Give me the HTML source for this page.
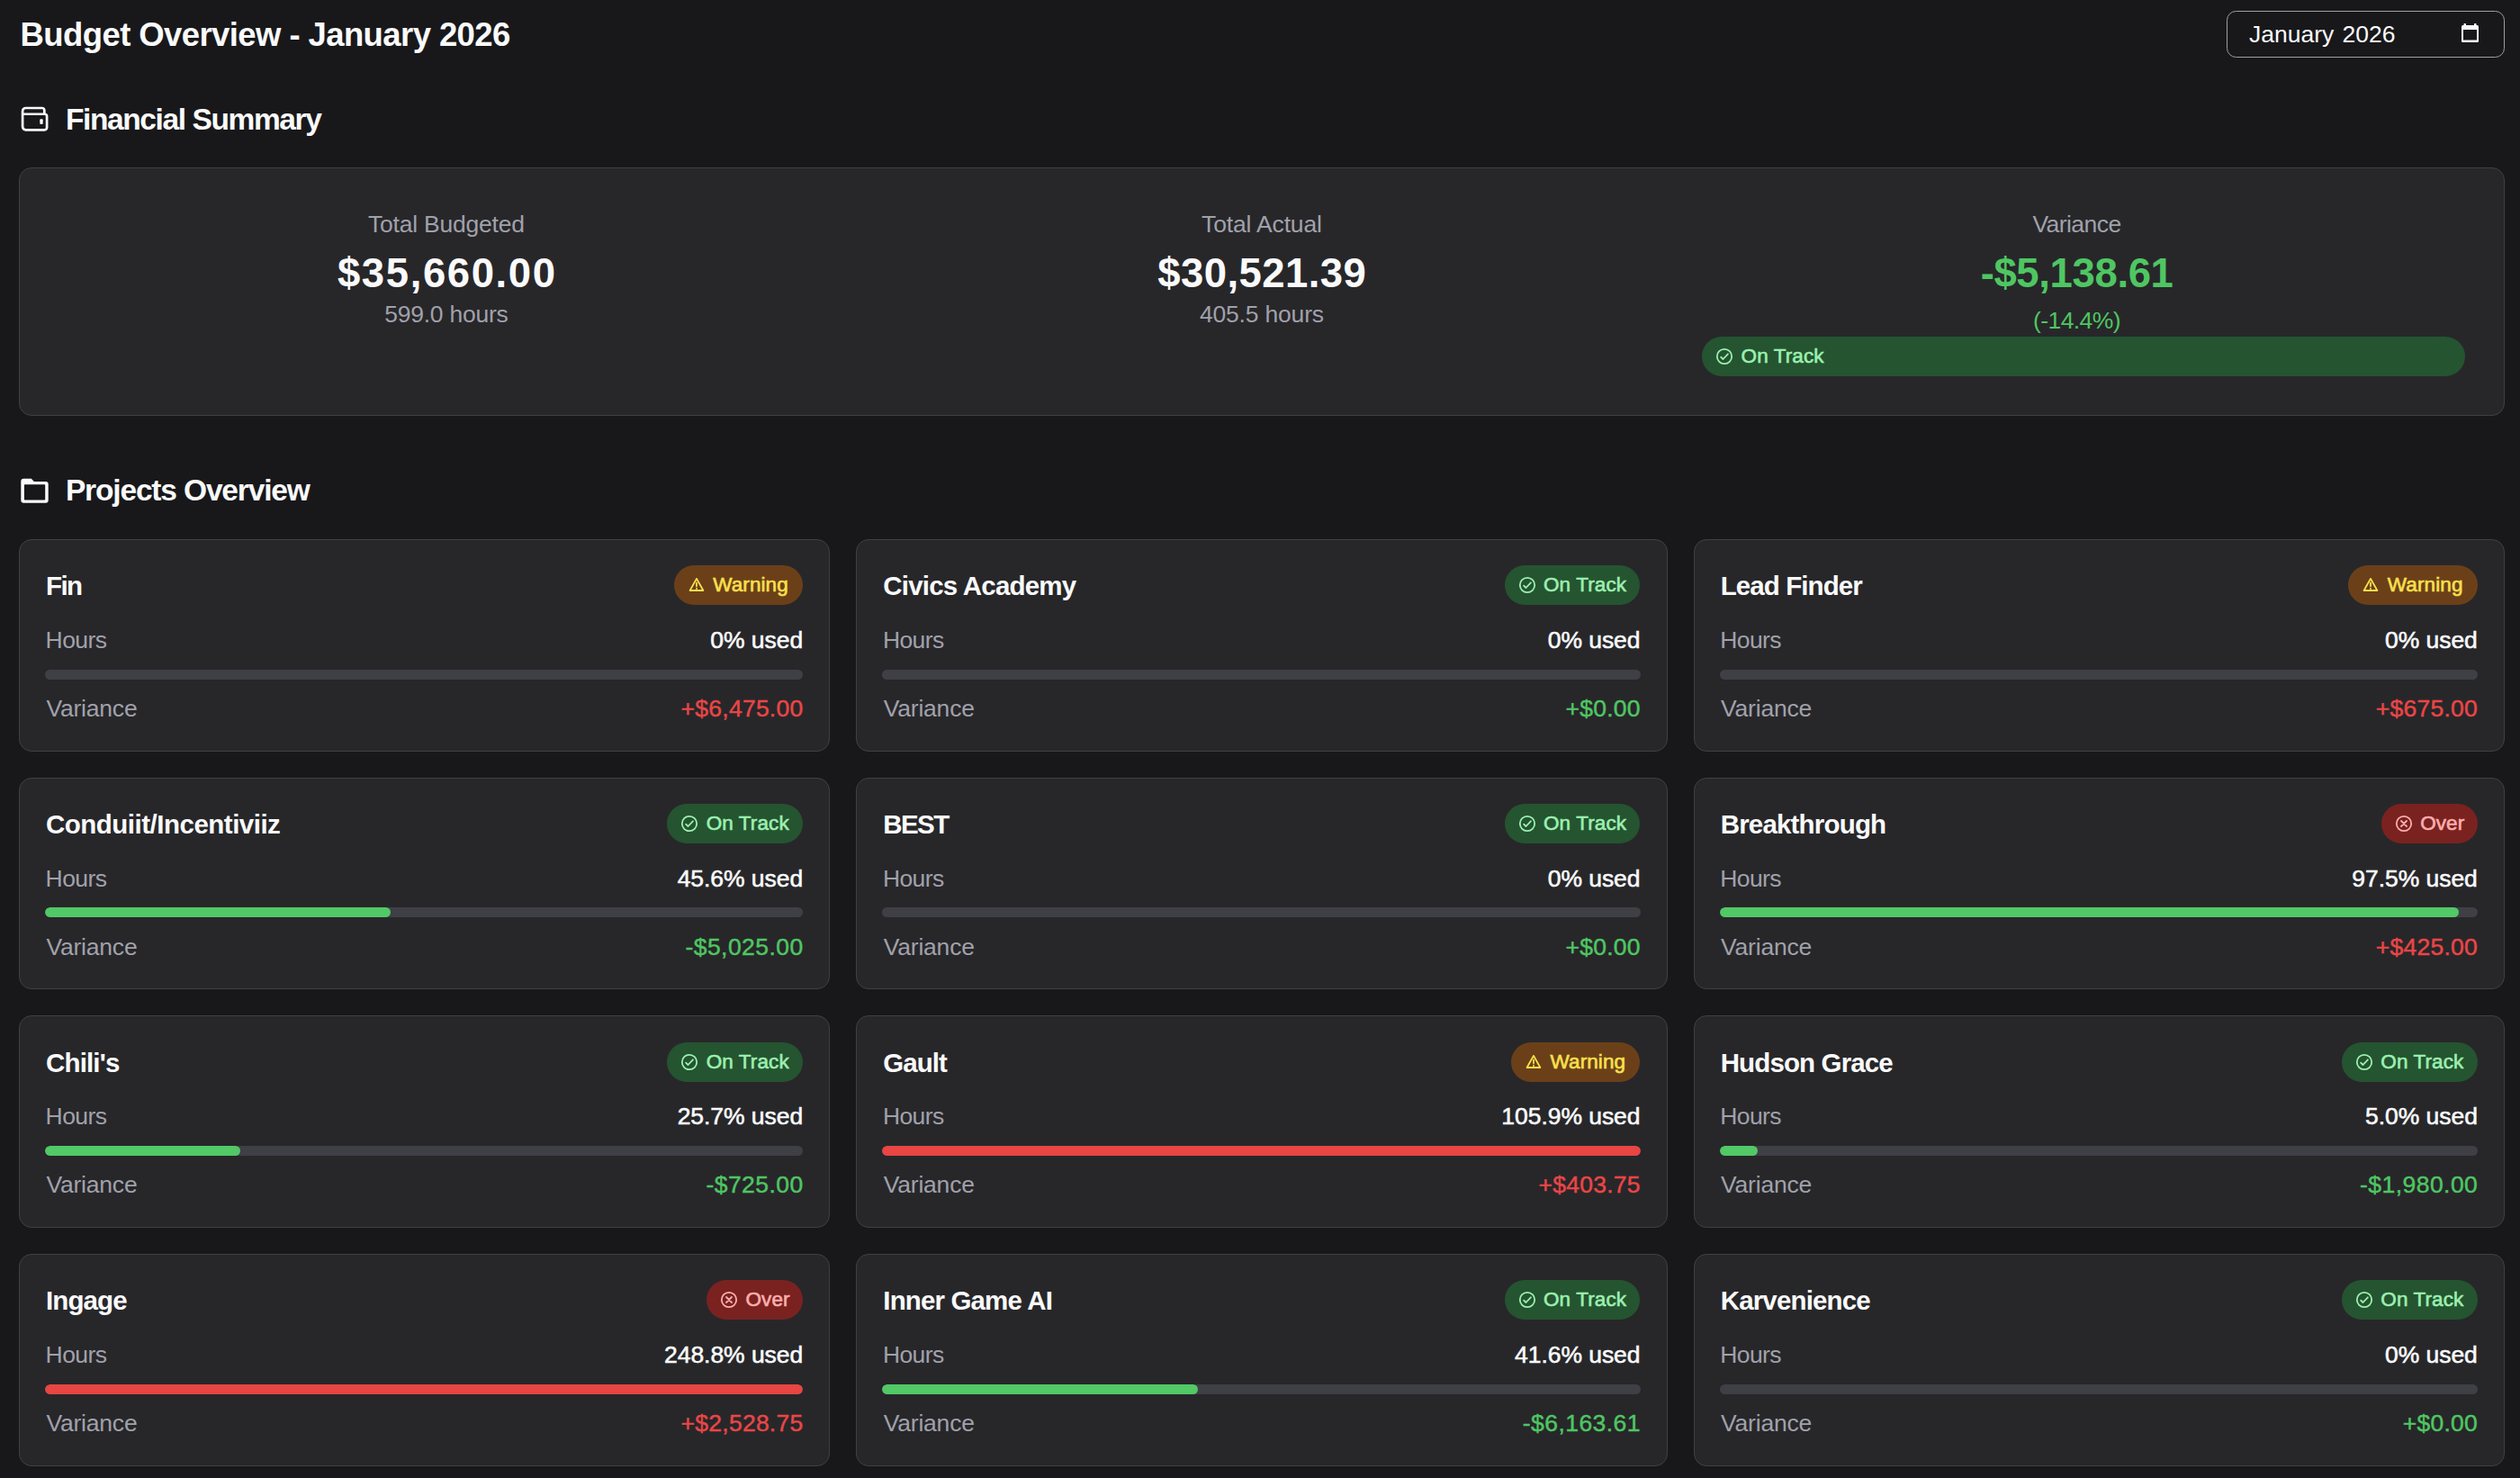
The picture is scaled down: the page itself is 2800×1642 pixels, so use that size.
<!DOCTYPE html>
<html><head><meta charset="utf-8"><title>Budget Overview</title>
<style>
html,body{margin:0;padding:0;background:#18181b;}
body{width:2800px;height:1642px;position:relative;overflow:hidden;font-family:"Liberation Sans",sans-serif;}
.t{position:absolute;white-space:nowrap;}
.card{position:absolute;box-sizing:border-box;background:#27272a;border:1px solid #3f3f46;border-radius:14px;}
.badge{position:absolute;height:44px;border-radius:22px;}
.track{position:absolute;height:11px;border-radius:6px;background:#3f3f46;overflow:hidden;}
.fill{position:absolute;left:0;top:0;bottom:0;border-radius:6px;}
</style></head><body>
<div class="t" style="top:21.00px;font-size:36.5px;line-height:36.5px;font-weight:700;color:#fafafa;letter-spacing:-0.594px;left:22.60px;">Budget Overview - January 2026</div>
<div style="position:absolute;left:2474px;top:12px;width:309px;height:52px;box-sizing:border-box;border:1.2px solid #9d9da6;border-radius:10.5px;"></div>
<div class="t" style="top:24.76px;font-size:26.5px;line-height:26.5px;font-weight:400;color:#fafafa;left:2499.00px;">January</div>
<div class="t" style="top:24.76px;font-size:26.5px;line-height:26.5px;font-weight:400;color:#fafafa;left:-338.51px;width:3000px;text-align:right;">2026</div>
<svg style="position:absolute;left:2733px;top:24px" width="24" height="26" viewBox="0 0 24 26"><rect x="2" y="4" width="19" height="19" rx="1.5" fill="#fafafa"/><rect x="4" y="9" width="15" height="11.5" fill="#18181b"/><rect x="4.5" y="2" width="2.5" height="3" rx="0.8" fill="#fafafa"/><rect x="16" y="2" width="2.5" height="3" rx="0.8" fill="#fafafa"/></svg>
<svg style="position:absolute;left:20px;top:115px" width="36" height="34" viewBox="0 0 36 34"><path d="M5.1 11.75H29.6A2.5 2.5 0 0 1 32.1 14.25V26.8A2.5 2.5 0 0 1 29.6 29.3H8.6A3.5 3.5 0 0 1 5.1 25.8V8.5A3.5 3.5 0 0 1 8.6 5H26.8A2.5 2.5 0 0 1 29.3 7.5V11.75" fill="none" stroke="#fafafa" stroke-width="2.7" stroke-linejoin="round"/><rect x="24.3" y="17.2" width="3.4" height="5.8" rx="1" fill="#fafafa"/></svg>
<div class="t" style="top:115.64px;font-size:33.5px;line-height:33.5px;font-weight:700;color:#fafafa;letter-spacing:-1.387px;left:72.90px;">Financial Summary</div>
<div class="card" style="left:21px;top:186px;width:2762px;height:276px;"></div>
<div class="t" style="top:235.56px;font-size:26.5px;line-height:26.5px;font-weight:400;color:#a1a1aa;letter-spacing:-0.225px;left:409.05px;">Total Budgeted</div>
<div class="t" style="top:280.78px;font-size:45.5px;line-height:45.5px;font-weight:700;color:#fafafa;letter-spacing:1.608px;left:374.90px;">$35,660.00</div>
<div class="t" style="top:335.66px;font-size:26.5px;line-height:26.5px;font-weight:400;color:#a1a1aa;letter-spacing:-0.249px;left:427.25px;">599.0 hours</div>
<div class="t" style="top:235.56px;font-size:26.5px;line-height:26.5px;font-weight:400;color:#a1a1aa;letter-spacing:-0.150px;left:1335.05px;">Total Actual</div>
<div class="t" style="top:280.78px;font-size:45.5px;line-height:45.5px;font-weight:700;color:#fafafa;letter-spacing:0.441px;left:1286.15px;">$30,521.39</div>
<div class="t" style="top:335.66px;font-size:26.5px;line-height:26.5px;font-weight:400;color:#a1a1aa;letter-spacing:-0.179px;left:1332.90px;">405.5 hours</div>
<div class="t" style="top:235.56px;font-size:26.5px;line-height:26.5px;font-weight:400;color:#a1a1aa;letter-spacing:-0.560px;left:2258.45px;">Variance</div>
<div class="t" style="top:280.78px;font-size:45.5px;line-height:45.5px;font-weight:700;color:#4fc662;letter-spacing:-0.367px;left:2200.65px;">-$5,138.61</div>
<div class="t" style="top:342.56px;font-size:26.5px;line-height:26.5px;font-weight:400;color:#4fc662;letter-spacing:-0.604px;left:2259.10px;">(-14.4%)</div>
<div class="badge" style="left:1891px;top:374px;width:848px;background:#255430"><svg width="20" height="20" viewBox="0 0 20 20" style="position:absolute;left:15px;top:12px"><circle cx="10" cy="10" r="8.2" fill="none" stroke="#9cf0b0" stroke-width="1.8"/><path d="M6.1 10.6 8.5 13 13.9 7.3" fill="none" stroke="#9cf0b0" stroke-width="1.8" stroke-linecap="round" stroke-linejoin="round"/></svg><div class="t" style="top:11.05px;font-size:22.5px;line-height:22.5px;font-weight:400;color:#9cf0b0;letter-spacing:0.100px;-webkit-text-stroke:0.6px #9cf0b0;left:43.60px;">On Track</div></div>
<svg style="position:absolute;left:20px;top:528px" width="36" height="34" viewBox="0 0 36 34"><path fill-rule="evenodd" fill="#fafafa" d="M6.3 3.8H14.8L17.8 7.0H30.7Q33.7 7.0 33.7 10V27.8Q33.7 30.8 30.7 30.8H6.3Q3.3 30.8 3.3 27.8V6.8Q3.3 3.8 6.3 3.8ZM7.5 10.3H29.4Q30.2 10.3 30.2 11.1V26.8Q30.2 27.6 29.4 27.6H7.7Q6.9 27.6 6.9 26.8V10.9Q6.9 10.3 7.5 10.3Z"/></svg>
<div class="t" style="top:527.74px;font-size:33.5px;line-height:33.5px;font-weight:700;color:#fafafa;letter-spacing:-1.157px;left:72.90px;">Projects Overview</div>
<div class="card" style="left:21.00px;top:599.00px;width:901.4px;height:235.8px;"><div class="t" style="top:36.32px;font-size:29.5px;line-height:29.5px;font-weight:700;color:#fafafa;letter-spacing:-1.600px;left:29.00px;">Fin</div><div class="badge" style="left:726.70px;top:28.30px;width:143.30px;background:#6b4019"><svg width="20" height="20" viewBox="0 0 20 20" style="position:absolute;left:15px;top:12px"><path d="M10 2.9 17.4 16 H2.6 Z" fill="none" stroke="#fbe04e" stroke-width="1.8" stroke-linejoin="round"/><path d="M10 7.5V11.3M10 13.6V14" fill="none" stroke="#fbe04e" stroke-width="1.8" stroke-linecap="round"/></svg><div class="t" style="top:11.05px;font-size:22.5px;line-height:22.5px;font-weight:400;color:#fbe04e;letter-spacing:0.100px;-webkit-text-stroke:0.6px #fbe04e;left:43.50px;">Warning</div></div><div class="t" style="top:98.16px;font-size:26.5px;line-height:26.5px;font-weight:400;color:#a1a1aa;letter-spacing:-0.600px;left:28.60px;">Hours</div><div class="t" style="top:98.16px;font-size:26.5px;line-height:26.5px;font-weight:400;color:#fafafa;letter-spacing:-0.050px;-webkit-text-stroke:0.55px #fafafa;left:-2129.87px;width:3000px;text-align:right;">0% used</div><div class="track" style="left:28px;top:143.5px;width:842.4px;"></div><div class="t" style="top:173.96px;font-size:26.5px;line-height:26.5px;font-weight:400;color:#a1a1aa;letter-spacing:-0.200px;left:29.40px;">Variance</div><div class="t" style="top:173.96px;font-size:26.5px;line-height:26.5px;font-weight:400;color:#ea4646;letter-spacing:0.250px;-webkit-text-stroke:0.45px #ea4646;left:-2129.54px;width:3000px;text-align:right;">+$6,475.00</div></div>
<div class="card" style="left:951.33px;top:599.00px;width:901.4px;height:235.8px;"><div class="t" style="top:36.32px;font-size:29.5px;line-height:29.5px;font-weight:700;color:#fafafa;letter-spacing:-0.795px;left:29.00px;">Civics Academy</div><div class="badge" style="left:719.20px;top:28.30px;width:150.80px;background:#255430"><svg width="20" height="20" viewBox="0 0 20 20" style="position:absolute;left:15px;top:12px"><circle cx="10" cy="10" r="8.2" fill="none" stroke="#9cf0b0" stroke-width="1.8"/><path d="M6.1 10.6 8.5 13 13.9 7.3" fill="none" stroke="#9cf0b0" stroke-width="1.8" stroke-linecap="round" stroke-linejoin="round"/></svg><div class="t" style="top:11.05px;font-size:22.5px;line-height:22.5px;font-weight:400;color:#9cf0b0;letter-spacing:0.100px;-webkit-text-stroke:0.6px #9cf0b0;left:43.50px;">On Track</div></div><div class="t" style="top:98.16px;font-size:26.5px;line-height:26.5px;font-weight:400;color:#a1a1aa;letter-spacing:-0.600px;left:28.60px;">Hours</div><div class="t" style="top:98.16px;font-size:26.5px;line-height:26.5px;font-weight:400;color:#fafafa;letter-spacing:-0.050px;-webkit-text-stroke:0.55px #fafafa;left:-2129.87px;width:3000px;text-align:right;">0% used</div><div class="track" style="left:28px;top:143.5px;width:842.4px;"></div><div class="t" style="top:173.96px;font-size:26.5px;line-height:26.5px;font-weight:400;color:#a1a1aa;letter-spacing:-0.200px;left:29.40px;">Variance</div><div class="t" style="top:173.96px;font-size:26.5px;line-height:26.5px;font-weight:400;color:#4fc662;letter-spacing:0.250px;-webkit-text-stroke:0.45px #4fc662;left:-2129.58px;width:3000px;text-align:right;">+$0.00</div></div>
<div class="card" style="left:1881.67px;top:599.00px;width:901.4px;height:235.8px;"><div class="t" style="top:36.32px;font-size:29.5px;line-height:29.5px;font-weight:700;color:#fafafa;letter-spacing:-0.909px;left:29.00px;">Lead Finder</div><div class="badge" style="left:726.70px;top:28.30px;width:143.30px;background:#6b4019"><svg width="20" height="20" viewBox="0 0 20 20" style="position:absolute;left:15px;top:12px"><path d="M10 2.9 17.4 16 H2.6 Z" fill="none" stroke="#fbe04e" stroke-width="1.8" stroke-linejoin="round"/><path d="M10 7.5V11.3M10 13.6V14" fill="none" stroke="#fbe04e" stroke-width="1.8" stroke-linecap="round"/></svg><div class="t" style="top:11.05px;font-size:22.5px;line-height:22.5px;font-weight:400;color:#fbe04e;letter-spacing:0.100px;-webkit-text-stroke:0.6px #fbe04e;left:43.50px;">Warning</div></div><div class="t" style="top:98.16px;font-size:26.5px;line-height:26.5px;font-weight:400;color:#a1a1aa;letter-spacing:-0.600px;left:28.60px;">Hours</div><div class="t" style="top:98.16px;font-size:26.5px;line-height:26.5px;font-weight:400;color:#fafafa;letter-spacing:-0.050px;-webkit-text-stroke:0.55px #fafafa;left:-2129.87px;width:3000px;text-align:right;">0% used</div><div class="track" style="left:28px;top:143.5px;width:842.4px;"></div><div class="t" style="top:173.96px;font-size:26.5px;line-height:26.5px;font-weight:400;color:#a1a1aa;letter-spacing:-0.200px;left:29.40px;">Variance</div><div class="t" style="top:173.96px;font-size:26.5px;line-height:26.5px;font-weight:400;color:#ea4646;letter-spacing:0.250px;-webkit-text-stroke:0.45px #ea4646;left:-2129.58px;width:3000px;text-align:right;">+$675.00</div></div>
<div class="card" style="left:21.00px;top:863.67px;width:901.4px;height:235.8px;"><div class="t" style="top:36.32px;font-size:29.5px;line-height:29.5px;font-weight:700;color:#fafafa;letter-spacing:-0.502px;left:29.00px;">Conduiit/Incentiviiz</div><div class="badge" style="left:719.20px;top:28.30px;width:150.80px;background:#255430"><svg width="20" height="20" viewBox="0 0 20 20" style="position:absolute;left:15px;top:12px"><circle cx="10" cy="10" r="8.2" fill="none" stroke="#9cf0b0" stroke-width="1.8"/><path d="M6.1 10.6 8.5 13 13.9 7.3" fill="none" stroke="#9cf0b0" stroke-width="1.8" stroke-linecap="round" stroke-linejoin="round"/></svg><div class="t" style="top:11.05px;font-size:22.5px;line-height:22.5px;font-weight:400;color:#9cf0b0;letter-spacing:0.100px;-webkit-text-stroke:0.6px #9cf0b0;left:43.50px;">On Track</div></div><div class="t" style="top:98.16px;font-size:26.5px;line-height:26.5px;font-weight:400;color:#a1a1aa;letter-spacing:-0.600px;left:28.60px;">Hours</div><div class="t" style="top:98.16px;font-size:26.5px;line-height:26.5px;font-weight:400;color:#fafafa;letter-spacing:-0.050px;-webkit-text-stroke:0.55px #fafafa;left:-2129.87px;width:3000px;text-align:right;">45.6% used</div><div class="track" style="left:28px;top:143.5px;width:842.4px;"><div class="fill" style="width:384.13px;background:#52c866"></div></div><div class="t" style="top:173.96px;font-size:26.5px;line-height:26.5px;font-weight:400;color:#a1a1aa;letter-spacing:-0.200px;left:29.40px;">Variance</div><div class="t" style="top:173.96px;font-size:26.5px;line-height:26.5px;font-weight:400;color:#4fc662;letter-spacing:0.450px;-webkit-text-stroke:0.45px #4fc662;left:-2129.37px;width:3000px;text-align:right;">-$5,025.00</div></div>
<div class="card" style="left:951.33px;top:863.67px;width:901.4px;height:235.8px;"><div class="t" style="top:36.32px;font-size:29.5px;line-height:29.5px;font-weight:700;color:#fafafa;letter-spacing:-1.600px;left:29.00px;">BEST</div><div class="badge" style="left:719.20px;top:28.30px;width:150.80px;background:#255430"><svg width="20" height="20" viewBox="0 0 20 20" style="position:absolute;left:15px;top:12px"><circle cx="10" cy="10" r="8.2" fill="none" stroke="#9cf0b0" stroke-width="1.8"/><path d="M6.1 10.6 8.5 13 13.9 7.3" fill="none" stroke="#9cf0b0" stroke-width="1.8" stroke-linecap="round" stroke-linejoin="round"/></svg><div class="t" style="top:11.05px;font-size:22.5px;line-height:22.5px;font-weight:400;color:#9cf0b0;letter-spacing:0.100px;-webkit-text-stroke:0.6px #9cf0b0;left:43.50px;">On Track</div></div><div class="t" style="top:98.16px;font-size:26.5px;line-height:26.5px;font-weight:400;color:#a1a1aa;letter-spacing:-0.600px;left:28.60px;">Hours</div><div class="t" style="top:98.16px;font-size:26.5px;line-height:26.5px;font-weight:400;color:#fafafa;letter-spacing:-0.050px;-webkit-text-stroke:0.55px #fafafa;left:-2129.87px;width:3000px;text-align:right;">0% used</div><div class="track" style="left:28px;top:143.5px;width:842.4px;"></div><div class="t" style="top:173.96px;font-size:26.5px;line-height:26.5px;font-weight:400;color:#a1a1aa;letter-spacing:-0.200px;left:29.40px;">Variance</div><div class="t" style="top:173.96px;font-size:26.5px;line-height:26.5px;font-weight:400;color:#4fc662;letter-spacing:0.250px;-webkit-text-stroke:0.45px #4fc662;left:-2129.58px;width:3000px;text-align:right;">+$0.00</div></div>
<div class="card" style="left:1881.67px;top:863.67px;width:901.4px;height:235.8px;"><div class="t" style="top:36.32px;font-size:29.5px;line-height:29.5px;font-weight:700;color:#fafafa;letter-spacing:-0.813px;left:29.00px;">Breakthrough</div><div class="badge" style="left:763.00px;top:28.30px;width:107.00px;background:#7a2220"><svg width="20" height="20" viewBox="0 0 20 20" style="position:absolute;left:15px;top:12px"><circle cx="10" cy="10" r="8.2" fill="none" stroke="#fdaeae" stroke-width="1.8"/><path d="M7 7 13 13M13 7 7 13" fill="none" stroke="#fdaeae" stroke-width="1.8" stroke-linecap="round"/></svg><div class="t" style="top:11.05px;font-size:22.5px;line-height:22.5px;font-weight:400;color:#fdaeae;letter-spacing:0.100px;-webkit-text-stroke:0.6px #fdaeae;left:43.50px;">Over</div></div><div class="t" style="top:98.16px;font-size:26.5px;line-height:26.5px;font-weight:400;color:#a1a1aa;letter-spacing:-0.600px;left:28.60px;">Hours</div><div class="t" style="top:98.16px;font-size:26.5px;line-height:26.5px;font-weight:400;color:#fafafa;letter-spacing:-0.050px;-webkit-text-stroke:0.55px #fafafa;left:-2129.87px;width:3000px;text-align:right;">97.5% used</div><div class="track" style="left:28px;top:143.5px;width:842.4px;"><div class="fill" style="width:821.34px;background:#52c866"></div></div><div class="t" style="top:173.96px;font-size:26.5px;line-height:26.5px;font-weight:400;color:#a1a1aa;letter-spacing:-0.200px;left:29.40px;">Variance</div><div class="t" style="top:173.96px;font-size:26.5px;line-height:26.5px;font-weight:400;color:#ea4646;letter-spacing:0.250px;-webkit-text-stroke:0.45px #ea4646;left:-2129.58px;width:3000px;text-align:right;">+$425.00</div></div>
<div class="card" style="left:21.00px;top:1128.33px;width:901.4px;height:235.8px;"><div class="t" style="top:36.32px;font-size:29.5px;line-height:29.5px;font-weight:700;color:#fafafa;letter-spacing:-0.837px;left:29.00px;">Chili's</div><div class="badge" style="left:719.20px;top:28.30px;width:150.80px;background:#255430"><svg width="20" height="20" viewBox="0 0 20 20" style="position:absolute;left:15px;top:12px"><circle cx="10" cy="10" r="8.2" fill="none" stroke="#9cf0b0" stroke-width="1.8"/><path d="M6.1 10.6 8.5 13 13.9 7.3" fill="none" stroke="#9cf0b0" stroke-width="1.8" stroke-linecap="round" stroke-linejoin="round"/></svg><div class="t" style="top:11.05px;font-size:22.5px;line-height:22.5px;font-weight:400;color:#9cf0b0;letter-spacing:0.100px;-webkit-text-stroke:0.6px #9cf0b0;left:43.50px;">On Track</div></div><div class="t" style="top:98.16px;font-size:26.5px;line-height:26.5px;font-weight:400;color:#a1a1aa;letter-spacing:-0.600px;left:28.60px;">Hours</div><div class="t" style="top:98.16px;font-size:26.5px;line-height:26.5px;font-weight:400;color:#fafafa;letter-spacing:-0.050px;-webkit-text-stroke:0.55px #fafafa;left:-2129.87px;width:3000px;text-align:right;">25.7% used</div><div class="track" style="left:28px;top:143.5px;width:842.4px;"><div class="fill" style="width:216.50px;background:#52c866"></div></div><div class="t" style="top:173.96px;font-size:26.5px;line-height:26.5px;font-weight:400;color:#a1a1aa;letter-spacing:-0.200px;left:29.40px;">Variance</div><div class="t" style="top:173.96px;font-size:26.5px;line-height:26.5px;font-weight:400;color:#4fc662;letter-spacing:0.450px;-webkit-text-stroke:0.45px #4fc662;left:-2129.34px;width:3000px;text-align:right;">-$725.00</div></div>
<div class="card" style="left:951.33px;top:1128.33px;width:901.4px;height:235.8px;"><div class="t" style="top:36.32px;font-size:29.5px;line-height:29.5px;font-weight:700;color:#fafafa;letter-spacing:-0.993px;left:29.00px;">Gault</div><div class="badge" style="left:726.70px;top:28.30px;width:143.30px;background:#6b4019"><svg width="20" height="20" viewBox="0 0 20 20" style="position:absolute;left:15px;top:12px"><path d="M10 2.9 17.4 16 H2.6 Z" fill="none" stroke="#fbe04e" stroke-width="1.8" stroke-linejoin="round"/><path d="M10 7.5V11.3M10 13.6V14" fill="none" stroke="#fbe04e" stroke-width="1.8" stroke-linecap="round"/></svg><div class="t" style="top:11.05px;font-size:22.5px;line-height:22.5px;font-weight:400;color:#fbe04e;letter-spacing:0.100px;-webkit-text-stroke:0.6px #fbe04e;left:43.50px;">Warning</div></div><div class="t" style="top:98.16px;font-size:26.5px;line-height:26.5px;font-weight:400;color:#a1a1aa;letter-spacing:-0.600px;left:28.60px;">Hours</div><div class="t" style="top:98.16px;font-size:26.5px;line-height:26.5px;font-weight:400;color:#fafafa;letter-spacing:-0.050px;-webkit-text-stroke:0.55px #fafafa;left:-2129.83px;width:3000px;text-align:right;">105.9% used</div><div class="track" style="left:28px;top:143.5px;width:842.4px;"><div class="fill" style="width:842.40px;background:#e84543"></div></div><div class="t" style="top:173.96px;font-size:26.5px;line-height:26.5px;font-weight:400;color:#a1a1aa;letter-spacing:-0.200px;left:29.40px;">Variance</div><div class="t" style="top:173.96px;font-size:26.5px;line-height:26.5px;font-weight:400;color:#ea4646;letter-spacing:0.250px;-webkit-text-stroke:0.45px #ea4646;left:-2129.58px;width:3000px;text-align:right;">+$403.75</div></div>
<div class="card" style="left:1881.67px;top:1128.33px;width:901.4px;height:235.8px;"><div class="t" style="top:36.32px;font-size:29.5px;line-height:29.5px;font-weight:700;color:#fafafa;letter-spacing:-0.867px;left:29.00px;">Hudson Grace</div><div class="badge" style="left:719.20px;top:28.30px;width:150.80px;background:#255430"><svg width="20" height="20" viewBox="0 0 20 20" style="position:absolute;left:15px;top:12px"><circle cx="10" cy="10" r="8.2" fill="none" stroke="#9cf0b0" stroke-width="1.8"/><path d="M6.1 10.6 8.5 13 13.9 7.3" fill="none" stroke="#9cf0b0" stroke-width="1.8" stroke-linecap="round" stroke-linejoin="round"/></svg><div class="t" style="top:11.05px;font-size:22.5px;line-height:22.5px;font-weight:400;color:#9cf0b0;letter-spacing:0.100px;-webkit-text-stroke:0.6px #9cf0b0;left:43.50px;">On Track</div></div><div class="t" style="top:98.16px;font-size:26.5px;line-height:26.5px;font-weight:400;color:#a1a1aa;letter-spacing:-0.600px;left:28.60px;">Hours</div><div class="t" style="top:98.16px;font-size:26.5px;line-height:26.5px;font-weight:400;color:#fafafa;letter-spacing:-0.050px;-webkit-text-stroke:0.55px #fafafa;left:-2129.83px;width:3000px;text-align:right;">5.0% used</div><div class="track" style="left:28px;top:143.5px;width:842.4px;"><div class="fill" style="width:42.12px;background:#52c866"></div></div><div class="t" style="top:173.96px;font-size:26.5px;line-height:26.5px;font-weight:400;color:#a1a1aa;letter-spacing:-0.200px;left:29.40px;">Variance</div><div class="t" style="top:173.96px;font-size:26.5px;line-height:26.5px;font-weight:400;color:#4fc662;letter-spacing:0.450px;-webkit-text-stroke:0.45px #4fc662;left:-2129.37px;width:3000px;text-align:right;">-$1,980.00</div></div>
<div class="card" style="left:21.00px;top:1393.00px;width:901.4px;height:235.8px;"><div class="t" style="top:36.32px;font-size:29.5px;line-height:29.5px;font-weight:700;color:#fafafa;letter-spacing:-0.893px;left:29.00px;">Ingage</div><div class="badge" style="left:763.00px;top:28.30px;width:107.00px;background:#7a2220"><svg width="20" height="20" viewBox="0 0 20 20" style="position:absolute;left:15px;top:12px"><circle cx="10" cy="10" r="8.2" fill="none" stroke="#fdaeae" stroke-width="1.8"/><path d="M7 7 13 13M13 7 7 13" fill="none" stroke="#fdaeae" stroke-width="1.8" stroke-linecap="round"/></svg><div class="t" style="top:11.05px;font-size:22.5px;line-height:22.5px;font-weight:400;color:#fdaeae;letter-spacing:0.100px;-webkit-text-stroke:0.6px #fdaeae;left:43.50px;">Over</div></div><div class="t" style="top:98.16px;font-size:26.5px;line-height:26.5px;font-weight:400;color:#a1a1aa;letter-spacing:-0.600px;left:28.60px;">Hours</div><div class="t" style="top:98.16px;font-size:26.5px;line-height:26.5px;font-weight:400;color:#fafafa;letter-spacing:-0.050px;-webkit-text-stroke:0.55px #fafafa;left:-2129.83px;width:3000px;text-align:right;">248.8% used</div><div class="track" style="left:28px;top:143.5px;width:842.4px;"><div class="fill" style="width:842.40px;background:#e84543"></div></div><div class="t" style="top:173.96px;font-size:26.5px;line-height:26.5px;font-weight:400;color:#a1a1aa;letter-spacing:-0.200px;left:29.40px;">Variance</div><div class="t" style="top:173.96px;font-size:26.5px;line-height:26.5px;font-weight:400;color:#ea4646;letter-spacing:0.250px;-webkit-text-stroke:0.45px #ea4646;left:-2129.54px;width:3000px;text-align:right;">+$2,528.75</div></div>
<div class="card" style="left:951.33px;top:1393.00px;width:901.4px;height:235.8px;"><div class="t" style="top:36.32px;font-size:29.5px;line-height:29.5px;font-weight:700;color:#fafafa;letter-spacing:-0.867px;left:29.00px;">Inner Game AI</div><div class="badge" style="left:719.20px;top:28.30px;width:150.80px;background:#255430"><svg width="20" height="20" viewBox="0 0 20 20" style="position:absolute;left:15px;top:12px"><circle cx="10" cy="10" r="8.2" fill="none" stroke="#9cf0b0" stroke-width="1.8"/><path d="M6.1 10.6 8.5 13 13.9 7.3" fill="none" stroke="#9cf0b0" stroke-width="1.8" stroke-linecap="round" stroke-linejoin="round"/></svg><div class="t" style="top:11.05px;font-size:22.5px;line-height:22.5px;font-weight:400;color:#9cf0b0;letter-spacing:0.100px;-webkit-text-stroke:0.6px #9cf0b0;left:43.50px;">On Track</div></div><div class="t" style="top:98.16px;font-size:26.5px;line-height:26.5px;font-weight:400;color:#a1a1aa;letter-spacing:-0.600px;left:28.60px;">Hours</div><div class="t" style="top:98.16px;font-size:26.5px;line-height:26.5px;font-weight:400;color:#fafafa;letter-spacing:-0.050px;-webkit-text-stroke:0.55px #fafafa;left:-2129.87px;width:3000px;text-align:right;">41.6% used</div><div class="track" style="left:28px;top:143.5px;width:842.4px;"><div class="fill" style="width:350.44px;background:#52c866"></div></div><div class="t" style="top:173.96px;font-size:26.5px;line-height:26.5px;font-weight:400;color:#a1a1aa;letter-spacing:-0.200px;left:29.40px;">Variance</div><div class="t" style="top:173.96px;font-size:26.5px;line-height:26.5px;font-weight:400;color:#4fc662;letter-spacing:0.450px;-webkit-text-stroke:0.45px #4fc662;left:-2129.37px;width:3000px;text-align:right;">-$6,163.61</div></div>
<div class="card" style="left:1881.67px;top:1393.00px;width:901.4px;height:235.8px;"><div class="t" style="top:36.32px;font-size:29.5px;line-height:29.5px;font-weight:700;color:#fafafa;letter-spacing:-0.835px;left:29.00px;">Karvenience</div><div class="badge" style="left:719.20px;top:28.30px;width:150.80px;background:#255430"><svg width="20" height="20" viewBox="0 0 20 20" style="position:absolute;left:15px;top:12px"><circle cx="10" cy="10" r="8.2" fill="none" stroke="#9cf0b0" stroke-width="1.8"/><path d="M6.1 10.6 8.5 13 13.9 7.3" fill="none" stroke="#9cf0b0" stroke-width="1.8" stroke-linecap="round" stroke-linejoin="round"/></svg><div class="t" style="top:11.05px;font-size:22.5px;line-height:22.5px;font-weight:400;color:#9cf0b0;letter-spacing:0.100px;-webkit-text-stroke:0.6px #9cf0b0;left:43.50px;">On Track</div></div><div class="t" style="top:98.16px;font-size:26.5px;line-height:26.5px;font-weight:400;color:#a1a1aa;letter-spacing:-0.600px;left:28.60px;">Hours</div><div class="t" style="top:98.16px;font-size:26.5px;line-height:26.5px;font-weight:400;color:#fafafa;letter-spacing:-0.050px;-webkit-text-stroke:0.55px #fafafa;left:-2129.87px;width:3000px;text-align:right;">0% used</div><div class="track" style="left:28px;top:143.5px;width:842.4px;"></div><div class="t" style="top:173.96px;font-size:26.5px;line-height:26.5px;font-weight:400;color:#a1a1aa;letter-spacing:-0.200px;left:29.40px;">Variance</div><div class="t" style="top:173.96px;font-size:26.5px;line-height:26.5px;font-weight:400;color:#4fc662;letter-spacing:0.250px;-webkit-text-stroke:0.45px #4fc662;left:-2129.58px;width:3000px;text-align:right;">+$0.00</div></div>
<script>(function(){var w=window.innerWidth;if(w&&Math.abs(w-2800)>4){document.documentElement.style.zoom=String(w/2800);}})();</script>
</body></html>
